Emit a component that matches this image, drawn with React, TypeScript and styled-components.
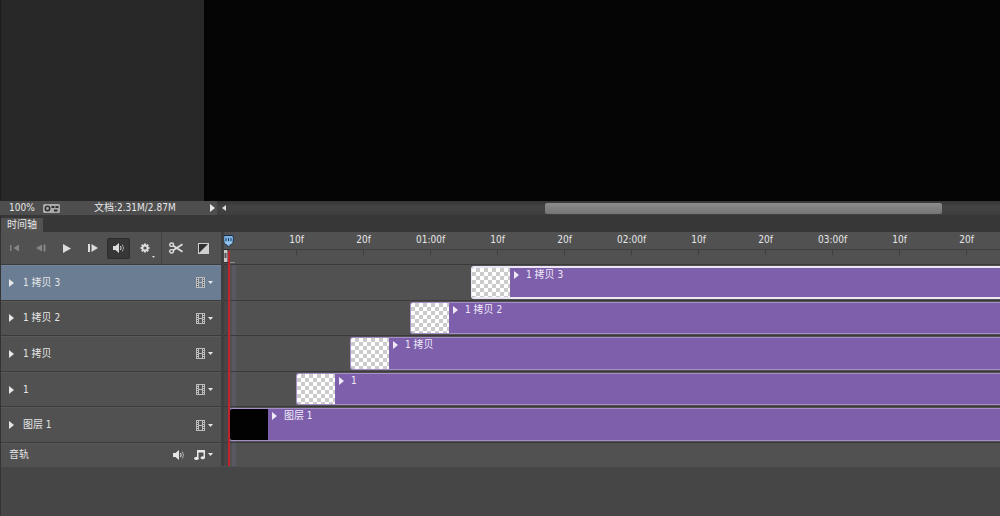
import React from 'react';
import styled, { createGlobalStyle, css } from 'styled-components';

const Global = createGlobalStyle`
  * { box-sizing: border-box; }
  body {
    margin: 0;
    background: #464646;
    color: #e6e6e6;
    font: 10px/14px "DejaVu Sans Condensed", "Noto Sans CJK SC", sans-serif;
  }
  button { font: inherit; color: inherit; border: 0; padding: 0; background: none; }
  svg { display: block; }
`;

const Page = styled.main`
  min-height: 100vh;
  display: flex;
  flex-direction: column;
  overflow: hidden;
`;
const Stage = styled.section`
  flex: 1;
  min-height: 120px;
  display: flex;
  background: #282828;
`;
const Pasteboard = styled.div`
  width: 204px;
  border-left: 1px solid #1c1c1c;
`;
const Artboard = styled.div`
  flex: 1;
  background: #050505;
`;

const StatusBar = styled.div`
  height: 14px;
  display: flex;
  align-items: center;
  background: #3c3c3c;
`;
const StatusInfo = styled.div`
  width: 217px;
  height: 14px;
  padding: 0 2px 0 9px;
  display: flex;
  align-items: center;
  background: #4e4e4e;
`;
const Zoom = styled.span`
  width: 34px;
`;
const DocSize = styled.span`
  margin-left: 34px;
  flex: 1;
  white-space: nowrap;
`;
const IconButton = styled.button`
  display: grid;
  place-items: center;
`;
const ScrollTrack = styled.div`
  flex: 1;
  height: 14px;
  padding-left: 5px;
  display: flex;
  align-items: center;
  background: linear-gradient(#363636, #444 40%, #3e3e3e);
`;
const ScrollThumb = styled.div`
  margin-left: 41%;
  width: 51%;
  height: 11px;
  border-radius: 2px;
  background: linear-gradient(#8c8c8c, #747474);
`;

const Tabs = styled.div`
  height: 17px;
  padding-top: 3px;
  display: flex;
  background: #373737;
  border-left: 1px solid #2e2e2e;
`;
const Tab = styled.button`
  width: 42px;
  height: 14px;
  background: #525252;
`;

const Timeline = styled.section`
  display: grid;
  grid-template-columns: 221px minmax(0, 1fr);
`;
const Layers = styled.div`
  border-left: 1px solid #333;
  background: #515151;
`;
const Toolbar = styled.div`
  height: 33px;
  padding-left: 2px;
  display: flex;
  align-items: center;
  gap: 3px;
  border-bottom: 1px solid #3c3c3c;
`;
const Tool = styled(IconButton)<{ $on?: boolean; $dim?: boolean; $wide?: boolean }>`
  width: ${p => (p.$wide ? 25 : 23)}px;
  height: 21px;
  border-radius: 2px;
  color: ${p => (p.$dim ? '#858585' : '#dcdcdc')};
  ${p => p.$on && css`
    background: #373737;
    border: 1px solid #2c2c2c;
  `}
`;
const Divider = styled.div`
  width: 1px;
  height: 32px;
  margin: 0 -2px 0 2px;
  background: #424242;
`;

const rows = css`
  height: 178px;
  display: grid;
  grid-template-rows: repeat(5, minmax(0, 1fr));
`;
const LayerList = styled.div`
  ${rows}
`;
const LayerRow = styled.div<{ $selected?: boolean }>`
  padding: 1px 8px 0 8px;
  display: flex;
  align-items: center;
  background: ${p => (p.$selected ? '#6b7d93' : '#515151')};
  border-bottom: 1px solid #3a3a3a;
  box-shadow: inset 0 1px ${p => (p.$selected ? '#74869b' : '#595959')};
`;
const LayerName = styled.span`
  flex: 1;
  margin-left: 9px;
  white-space: pre;
`;
const AudioRow = styled.div`
  height: 23px;
  padding: 0 8px;
  display: flex;
  align-items: center;
  gap: 9px;
  box-shadow: inset 0 1px #595959;
`;
const AudioName = styled.span`
  flex: 1;
`;
const MenuButton = styled(IconButton)`
  display: flex;
  align-items: center;
  gap: 3px;
`;

const Tracks = styled.div`
  position: relative;
  overflow: hidden;
  background: linear-gradient(90deg, #464646 4px, #515151 4px 8px, #585862 8px 12px, #515151 12px);
  border-left: 3px solid #3f3f3f;
`;
const Ruler = styled.div`
  height: 18px;
  padding-left: 39px;
  display: flex;
  line-height: 16px;
  background: #515151;
  border-bottom: 1px solid #3e3e3e;
`;
const Mark = styled.span`
  flex: 0 0 67px;
  text-align: center;
`;
const WorkArea = styled.div`
  height: 15px;
  padding-left: 39px;
  display: flex;
  background: #515151;
  border-bottom: 1px solid #3a3a3a;
`;
const Tick = styled.span`
  flex: 0 0 67px;
  height: 5px;
  background: linear-gradient(#3e3e3e, #3e3e3e) center / 1px 5px no-repeat;
`;
const TrackList = styled.div`
  ${rows}
`;
const Track = styled.div<{ $start: number }>`
  padding: 1px 0 1px ${p => p.$start}px;
  display: flex;
  border-bottom: 1px solid #3a3a3a;
`;
const Clip = styled.div<{ $selected?: boolean }>`
  flex: 1;
  display: flex;
  align-items: stretch;
  background: #7e5fac;
  border: solid ${p => (p.$selected ? '#ece6f4' : '#a58fc6')};
  border-width: ${p => (p.$selected ? '2px 0 2px 1px' : '1px 0 1px 1px')};
  border-radius: 3px 0 0 3px;
  overflow: hidden;
`;
const Thumb = styled.div<{ $solid?: boolean }>`
  width: 38px;
  background: ${p => (p.$solid ? '#020202' : 'repeating-conic-gradient(#cbcbcb 0 25%, #fff 0 50%) 0 0 / 8px 8px')};
`;
const ClipLabel = styled.div`
  height: 14px;
  padding-left: 4px;
  display: flex;
  align-items: center;
  gap: 7px;
  color: #f0eaf8;
  white-space: pre;
`;
const AudioTrack = styled.div`
  height: 23px;
`;
const PanelFooter = styled.footer`
  height: 50px;
  border-top: 1px solid #505050;
  border-left: 1px solid #333;
`;

const Playhead = styled.div`
  position: absolute;
  top: 2px;
  bottom: 0;
  left: -3px;
  width: 14px;
  pointer-events: none;
`;
const PlayLine = styled.div`
  position: absolute;
  top: 17px;
  bottom: 0;
  left: 7px;
  width: 2px;
  background: #c2222c;
`;

const Triangle = ({ w = 5, h = 8 }: { w?: number; h?: number }) => (
  <svg width={w} height={h} viewBox="0 0 5 8" preserveAspectRatio="none" fill="currentColor"><path d="M0 0 5 4 0 8Z" /></svg>
);
const Caret = () => (
  <svg width="5" height="3" viewBox="0 0 5 3" fill="currentColor"><path d="M0 0H5L2.5 3Z" /></svg>
);
const Film = () => (
  <svg width="9" height="11" viewBox="0 0 9 11">
    <path d="M0 0H3V11H0ZM6 0H9V11H6Z" fill="#bdbdbd" />
    <path d="M3 .5H6M3 5.5H6M3 10.5H6" stroke="#bdbdbd" />
    <path d="M1 1.5H2M1 3.5H2M1 5.5H2M1 7.5H2M1 9.5H2M7 1.5H8M7 3.5H8M7 5.5H8M7 7.5H8M7 9.5H8" stroke="#484848" />
  </svg>
);
const Speaker = () => (
  <svg width="12" height="10" viewBox="0 0 12 10" fill="currentColor">
    <path d="M0 3H2.5L6 0V10L2.5 7H0Z" />
    <path d="M7.5 3Q8.7 5 7.5 7" fill="none" stroke="currentColor" />
    <path d="M9.3 1.5Q11.7 5 9.3 8.5" fill="none" stroke="currentColor" opacity=".6" />
  </svg>
);
const Note = () => (
  <svg width="11" height="10" viewBox="0 0 11 10" fill="currentColor">
    <path d="M3 0H11V8H9.5V2.5H4.5V9H3Z" />
    <ellipse cx="2.4" cy="8.4" rx="2.3" ry="1.6" /><ellipse cx="8.7" cy="7.8" rx="2.2" ry="1.5" />
  </svg>
);
const Transport = ({ kind }: { kind: 'first' | 'prev' | 'next' }) => (
  <svg width="10" height="8" viewBox="0 0 10 8" fill="currentColor">
    {kind === 'first' && <path d="M0 1H1.5V7H0ZM9 .5V7.5L3.5 4Z" />}
    {kind === 'prev' && <path d="M0 4 6 .5V7.5ZM7.5 .5H9.5V7.5H7.5Z" />}
    {kind === 'next' && <path d="M0 0H2V8H0ZM3.5 0 10 4 3.5 8Z" />}
  </svg>
);
const Gear = () => (
  <svg width="20" height="20" viewBox="0 0 20 20">
    <g stroke="currentColor" strokeWidth="2">
      <path d="M10 5.5V14.5M5.5 10H14.5M6.8 6.8 13.2 13.2M13.2 6.8 6.8 13.2" />
    </g>
    <circle cx="10" cy="10" r="3.4" fill="currentColor" />
    <circle cx="10" cy="10" r="1.6" fill="#515151" />
    <path d="M17 18H20L18.5 20Z" fill="currentColor" />
  </svg>
);
const Scissors = () => (
  <svg width="14" height="12" viewBox="0 0 14 12" fill="none" stroke="currentColor">
    <ellipse cx="2.6" cy="2.7" rx="1.9" ry="1.7" strokeWidth="1.4" />
    <ellipse cx="2.6" cy="9.3" rx="1.9" ry="1.7" strokeWidth="1.4" />
    <path d="M4.2 3.8 13.5 9.8M4.2 8.2 13.5 2.2" strokeWidth="1.8" />
  </svg>
);
const Transition = () => (
  <svg width="11" height="11" viewBox="0 0 11 11">
    <rect x=".5" y=".5" width="10" height="10" fill="#303030" stroke="#cfcfcf" />
    <path d="M11 0V11H0Z" fill="#cfcfcf" />
  </svg>
);
const Marker = () => (
  <svg width="14" height="31" viewBox="0 0 14 31">
    <path d="M3 1.5H12Q13 4.5 12 8.5L7.5 13 3 8.5Q2 4.5 3 1.5Z" fill="#7fb4e2" stroke="#1b2c4a" />
    <path d="M5 4V7M7.5 4V7M10 4V7" stroke="#1f3f68" />
    <path d="M4 9H11" stroke="#b5d5f0" />
    <path d="M2 15.5H7V28.5H2Z" fill="#c8c8c8" stroke="#2c2c2c" />
    <path d="M4.5 19V24" stroke="#555" strokeWidth="2" />
    <path d="M9 28.5H14" stroke="#8c8c8c" />
  </svg>
);
const StatusIcon = () => (
  <svg width="17" height="9" viewBox="0 0 17 9">
    <rect width="17" height="9" rx="1.5" fill="#aaa" />
    <circle cx="4.5" cy="4.5" r="2.2" fill="#aaa" stroke="#303030" strokeWidth="1.5" />
    <path d="M8.5 3H11.5M11 6.5H14.5M12.5 3H15.5" stroke="#303030" strokeWidth="2" />
  </svg>
);

const clips = [
  { name: '1 拷贝 3', start: 247, selected: true },
  { name: '1 拷贝 2', start: 186 },
  { name: '1 拷贝', start: 126 },
  { name: '1', start: 72 },
  { name: '图层 1', start: 5, solid: true },
];
const marks = ['10f', '20f', '01:00f', '10f', '20f', '02:00f', '10f', '20f', '03:00f', '10f', '20f'];

export default function App() {
  return (
    <Page>
      <Global />
      <Stage><Pasteboard /><Artboard /></Stage>
      <StatusBar>
        <StatusInfo>
          <Zoom>100%</Zoom>
          <StatusIcon />
          <DocSize>文档:2.31M/2.87M</DocSize>
          <IconButton aria-label="Status options"><Triangle /></IconButton>
        </StatusInfo>
        <ScrollTrack>
          <svg width="4" height="6" viewBox="0 0 4 6"><path d="M4 0V6L0 3Z" fill="#ddd" /></svg>
          <ScrollThumb />
        </ScrollTrack>
      </StatusBar>
      <Tabs><Tab>时间轴</Tab></Tabs>
      <Timeline>
        <Layers>
          <Toolbar>
            <Tool $dim aria-label="First frame"><Transport kind="first" /></Tool>
            <Tool $dim aria-label="Previous frame"><Transport kind="prev" /></Tool>
            <Tool aria-label="Play"><Triangle w={8} h={9} /></Tool>
            <Tool aria-label="Next frame"><Transport kind="next" /></Tool>
            <Tool $on aria-label="Audio"><Speaker /></Tool>
            <Tool aria-label="Settings"><Gear /></Tool>
            <Divider />
            <Tool $wide aria-label="Split"><Scissors /></Tool>
            <Tool $wide aria-label="Transition"><Transition /></Tool>
          </Toolbar>
          <LayerList>
            {clips.map(c => (
              <LayerRow key={c.name} $selected={c.selected}>
                <IconButton aria-label={`Expand ${c.name}`}><Triangle /></IconButton>
                <LayerName>{c.name}</LayerName>
                <MenuButton aria-label={`${c.name} options`}><Film /><Caret /></MenuButton>
              </LayerRow>
            ))}
          </LayerList>
          <AudioRow>
            <AudioName>音轨</AudioName>
            <IconButton aria-label="Mute"><Speaker /></IconButton>
            <MenuButton aria-label="Audio options"><Note /><Caret /></MenuButton>
          </AudioRow>
        </Layers>
        <Tracks>
          <Ruler>{marks.map((m, i) => <Mark key={i}>{m}</Mark>)}</Ruler>
          <WorkArea>{marks.map((_, i) => <Tick key={i} />)}</WorkArea>
          <TrackList>
            {clips.map(c => (
              <Track key={c.name} $start={c.start}>
                <Clip $selected={c.selected}>
                  <Thumb $solid={c.solid} />
                  <ClipLabel><Triangle />{c.name}</ClipLabel>
                </Clip>
              </Track>
            ))}
          </TrackList>
          <AudioTrack />
          <Playhead><PlayLine /><Marker /></Playhead>
        </Tracks>
      </Timeline>
      <PanelFooter />
    </Page>
  );
}
